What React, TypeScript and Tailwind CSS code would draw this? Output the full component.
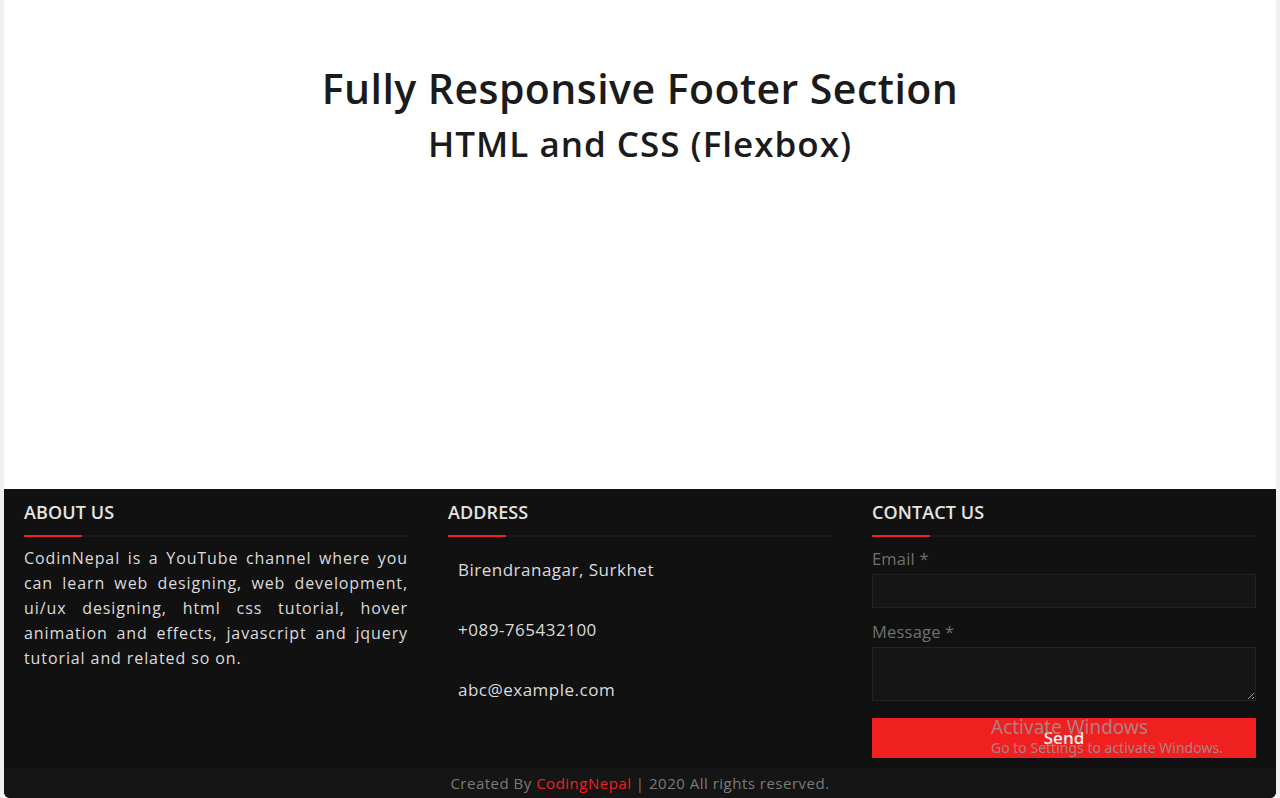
import React from 'react';

const font = { fontFamily: '"Open Sans", "Noto Sans", sans-serif' };

function Heading({ children }: { children: React.ReactNode }) {
  return (
    <div>
      <h2 className="text-[18px] leading-[27px] font-semibold tracking-[0.1px] text-[#e4e4e4]">{children}</h2>
      <div className="relative mt-[9px] h-[2px] bg-[#1b1b1b]">
        <span className="absolute left-0 top-0 h-[2px] w-[58px] bg-[#f12020]" />
      </div>
    </div>
  );
}

export default function App() {
  return (
    <div className="min-h-[798px] bg-[#f0f0f0] px-[4px]" style={font}>
      <div className="flex min-h-[798px] flex-col bg-white">
        {/* Titel */}
        <div className="flex h-[489px] flex-col items-center pt-[61px] text-[#1b1b1b]">
          <h1 className="text-[41px] leading-[54px] font-semibold tracking-[0.45px]">Fully Responsive Footer Section</h1>
          <h2 className="mt-[5px] text-[35px] leading-[48px] font-semibold tracking-[1px]">HTML and CSS (Flexbox)</h2>
        </div>

        {/* Footer */}
        <footer className="relative flex-1 overflow-hidden rounded-b-[6px] bg-[#111111]">
          <div className="flex gap-10 px-5 pt-[10px] pb-[10px]">
            <div className="flex-1">
              <Heading>ABOUT US</Heading>
              <p className="mt-[9px] text-justify text-[16px] leading-[25px] tracking-[0.9px] text-[#dcdcdc]">
                CodinNepal is a YouTube channel where you can learn web designing, web development, ui/ux designing, html
                css tutorial, hover animation and effects, javascript and jquery tutorial and related so on.
              </p>
            </div>

            <div className="flex-1">
              <Heading>ADDRESS</Heading>
              <ul className="mt-[21px] flex flex-col gap-[36px] pl-[10px] text-[17px] leading-[24px] font-medium tracking-[0.5px] text-[#dcdcdc]">
                <li>Birendranagar, Surkhet</li>
                <li>+089-765432100</li>
                <li>abc@example.com</li>
              </ul>
            </div>

            <div className="flex-1">
              <Heading>CONTACT US</Heading>
              <form className="mt-[10px] flex flex-col">
                <label className="text-[16.5px] leading-[24px] tracking-[0.2px] text-[#707070]">Email *</label>
                <input className="mt-[3px] h-[34px] border border-[#222] bg-[#151515] outline-none" />
                <label className="mt-[12px] text-[16.5px] leading-[24px] tracking-[0.2px] text-[#707070]">Message *</label>
                <textarea className="mt-[3px] h-[54px] resize-y border border-[#222] bg-[#151515] outline-none" />
                <button
                  type="button"
                  className="mt-[17px] h-[40px] bg-[#f12020] text-[17px] font-semibold text-[#f2f2f2]"
                >
                  Send
                </button>
              </form>
            </div>
          </div>

          <div className="flex h-[30px] items-center justify-center bg-[#151515] text-[15px] tracking-[0.5px] text-[#7b7b7b]">
            Created By&nbsp;<span className="text-[#f12020]">CodingNepal</span>&nbsp;| 2020 All rights reserved.
          </div>

          {/* Windows-Hinweis über der Seite */}
          <div
            className="pointer-events-none absolute left-[987px] top-[227px] text-[#9a9a9a]/80"
            style={{ fontFamily: '"Noto Sans", sans-serif' }}
          >
            <p className="text-[19px] leading-[22px]">Activate Windows</p>
            <p className="text-[14px] leading-[20px]">Go to Settings to activate Windows.</p>
          </div>
        </footer>
      </div>
    </div>
  );
}
